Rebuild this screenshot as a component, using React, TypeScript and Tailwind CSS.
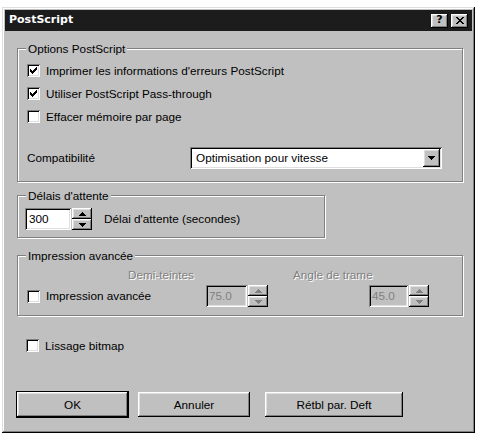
import type { ReactNode } from 'react'

const raised =
  'bg-[#c0c0c0] shadow-[inset_-1px_-1px_0_#000,inset_1px_1px_0_#fff,inset_-2px_-2px_0_#808080,inset_2px_2px_0_#dfdfdf]'
const sunken =
  'shadow-[inset_1px_1px_0_#808080,inset_-1px_-1px_0_#fff,inset_2px_2px_0_#000,inset_-2px_-2px_0_#dfdfdf]'
const etched = 'text-[#808080] [text-shadow:1px_1px_0_#fff]'

const Check = () => (
  <svg width="7" height="7" viewBox="0 0 7 7" shapeRendering="crispEdges">
    <path
      d="M6 0h1v3h-1zM5 1h1v3h-1zM4 2h1v3h-1zM0 2h1v3h-1zM1 3h1v3h-1zM2 4h1v3h-1zM3 3h1v3h-1z"
      fill="#000"
    />
  </svg>
)

const CheckBox = ({ checked, label }: { checked?: boolean; label: string }) => (
  <div className="flex h-[23px] items-center gap-[6px]">
    <div className={`flex h-[13px] w-[13px] items-center justify-center bg-white ${sunken}`}>
      {checked && <Check />}
    </div>
    <span>{label}</span>
  </div>
)

const Arrow = ({ up, disabled }: { up?: boolean; disabled?: boolean }) => (
  <svg width="7" height="4" viewBox="0 0 7 4" shapeRendering="crispEdges">
    <path
      d={up ? 'M3 0h1v1h-1zM2 1h3v1h-3zM1 2h5v1h-5zM0 3h7v1h-7z' : 'M0 0h7v1h-7zM1 1h5v1h-5zM2 2h3v1h-3zM3 3h1v1h-1z'}
      fill={disabled ? '#808080' : '#000'}
    />
  </svg>
)

const Spinner = ({ disabled }: { disabled?: boolean }) => (
  <div className="flex h-[22px] w-[20px] flex-col">
    <div className={`flex h-[11px] items-center justify-center ${raised}`}>
      <Arrow up disabled={disabled} />
    </div>
    <div className={`flex h-[11px] items-center justify-center ${raised}`}>
      <Arrow disabled={disabled} />
    </div>
  </div>
)

const Group = ({ title, className, children }: { title: string; className: string; children: ReactNode }) => (
  <div className={`relative border border-[#808080] shadow-[1px_1px_0_#fff,inset_1px_1px_0_#fff] ${className}`}>
    <span className="absolute -top-[8px] left-[8px] bg-[#c0c0c0] px-[2px] leading-[15px]">{title}</span>
    {children}
  </div>
)

const Button = ({ label, w, isDefault }: { label: string; w: string; isDefault?: boolean }) => (
  <div
    className={`flex h-[25px] items-center justify-center ${w} ${raised} ${
      isDefault ? 'outline outline-1 outline-black' : ''
    }`}
  >
    {label}
  </div>
)

export default function App() {
  return (
    <div className="min-h-[434px] bg-white pl-[2px] pt-[7px] font-['Liberation_Sans',Arial,sans-serif] text-[11.75px] text-black">
      <div
        className={`flex h-[426px] w-[473px] flex-col bg-[#c0c0c0] p-[3px] shadow-[inset_-1px_-1px_0_#000,inset_1px_1px_0_#dfdfdf,inset_-2px_-2px_0_#808080,inset_2px_2px_0_#fff]`}
      >
        {/* title bar */}
        <div className="flex h-[21px] items-center bg-[#1c1c1c] pl-[4px] pr-[4px]">
          <span className="font-['DejaVu_Sans',Verdana,sans-serif] text-[11px] font-bold text-white">PostScript</span>
          <div className="ml-auto flex gap-[3px]">
            <div className={`flex h-[14px] w-[17px] items-center justify-center pb-[1px] font-['DejaVu_Sans',sans-serif] text-[11px] font-bold ${raised}`}>
              ?
            </div>
            <div className={`flex h-[14px] w-[17px] items-center justify-center ${raised}`}>
              <svg width="8" height="7" viewBox="0 0 8 7" shapeRendering="crispEdges">
                <path
                  d="M0 0h2v1h-2zM6 0h2v1h-2zM1 1h2v1h-2zM5 1h2v1h-2zM2 2h4v1h-4zM3 3h2v1h-2zM2 4h4v1h-4zM1 5h2v1h-2zM5 5h2v1h-2zM0 6h2v1h-2zM6 6h2v1h-2z"
                  fill="#000"
                />
              </svg>
            </div>
          </div>
        </div>

        <div className="flex flex-col pl-[12px]">
          <Group title="Options PostScript" className="mt-[17px] h-[134px] w-[446px]">
            <div className="flex flex-col pl-[9px] pt-[10px]">
              <CheckBox checked label="Imprimer les informations d'erreurs PostScript" />
              <CheckBox checked label="Utiliser PostScript Pass-through" />
              <CheckBox label="Effacer mémoire par page" />
              <div className="mt-[19px] flex h-[22px] items-center">
                <span className="w-[163px]">Compatibilité</span>
                <div className={`flex h-[22px] w-[252px] items-center bg-white pl-[6px] ${sunken}`}>
                  <span>Optimisation pour vitesse</span>
                  <div className={`ml-auto mr-[2px] flex h-[18px] w-[17px] items-center justify-center ${raised}`}>
                    <Arrow />
                  </div>
                </div>
              </div>
            </div>
          </Group>

          <Group title="Délais d'attente" className="mt-[13px] h-[43px] w-[308px]">
            <div className="flex items-center pl-[7px] pt-[12px]">
              <div className={`flex h-[22px] w-[46px] items-center bg-white pl-[4px] ${sunken}`}>300</div>
              <div className="ml-[1px]">
                <Spinner />
              </div>
              <span className="ml-[12px]">Délai d'attente (secondes)</span>
            </div>
          </Group>

          <Group title="Impression avancée" className="mt-[17px] h-[61px] w-[446px]">
            <div className="flex pt-[10px]">
              <span className={`ml-[110px] w-[165px] ${etched}`}>Demi-teintes</span>
              <span className={etched}>Angle de trame</span>
            </div>
            <div className="flex items-center pl-[9px] pt-[1px]">
              <div className="w-[179px]">
                <CheckBox label="Impression avancée" />
              </div>
              <div className={`flex h-[22px] w-[41px] items-center pl-[3px] text-[#808080] ${sunken}`}>75.0</div>
              <div className="ml-[1px]">
                <Spinner disabled />
              </div>
              <div className={`ml-[101px] flex h-[22px] w-[39px] items-center pl-[3px] text-[#808080] ${sunken}`}>45.0</div>
              <div className="ml-[1px]">
                <Spinner disabled />
              </div>
            </div>
          </Group>

          <div className="mt-[18px] pl-[9px]">
            <CheckBox label="Lissage bitmap" />
          </div>

          <div className="mt-[35px] flex">
            <Button label="OK" w="w-[111px]" isDefault />
            <div className="ml-[10px]">
              <Button label="Annuler" w="w-[112px]" />
            </div>
            <div className="ml-[15px]">
              <Button label="Rétbl par. Deft" w="w-[138px]" />
            </div>
          </div>
        </div>
      </div>
    </div>
  )
}
